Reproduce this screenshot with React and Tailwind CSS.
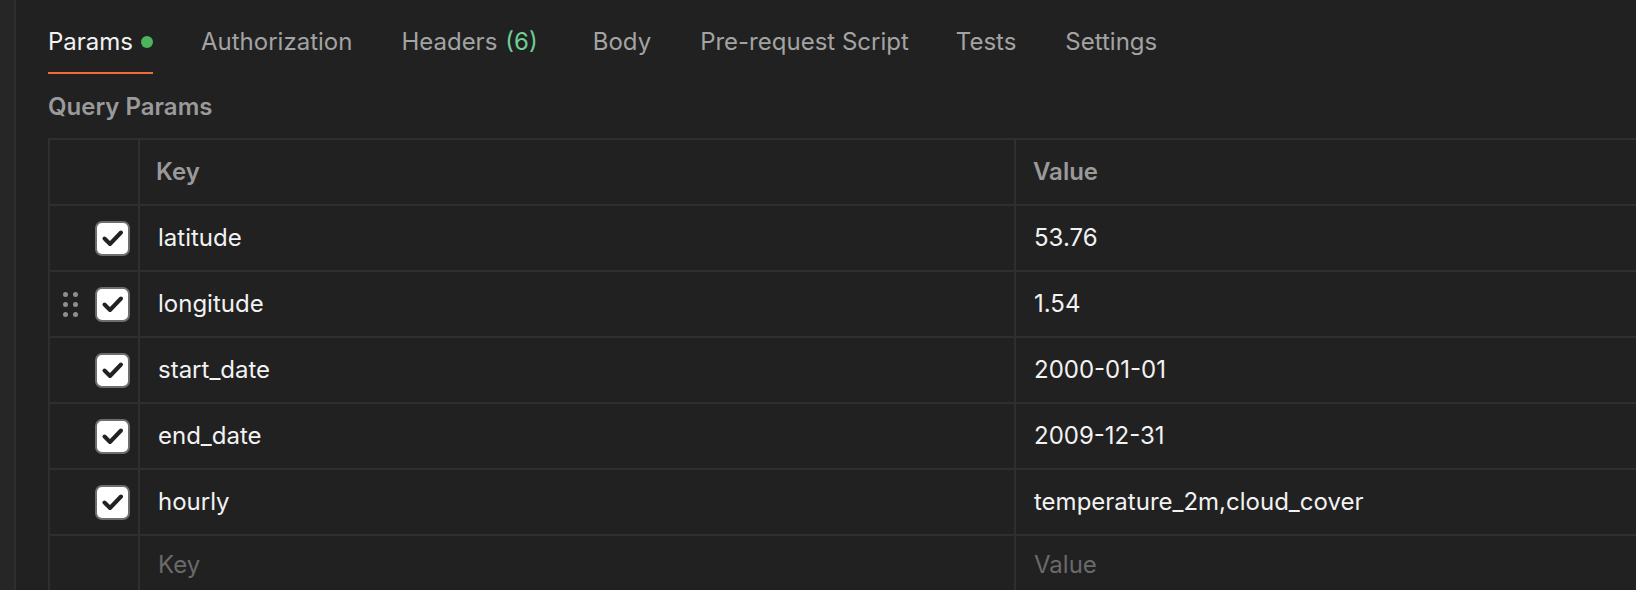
import React from "react";

const rows = [
  { k: "latitude", v: "53.76" },
  { k: "longitude", v: "1.54", drag: true },
  { k: "start_date", v: "2000-01-01" },
  { k: "end_date", v: "2009-12-31" },
  { k: "hourly", v: "temperature_2m,cloud_cover" },
];

function Check() {
  return (
    <div className="w-[35px] h-[35px] rounded-[7px] bg-white border-2 border-[#6e6e6e] flex items-center justify-center">
      <svg width="26" height="26" viewBox="0 0 26 26" fill="none">
        <path d="M4.5 13.5 L10 19 L21 7.5" stroke="#222" strokeWidth="4" strokeLinecap="round" strokeLinejoin="round" />
      </svg>
    </div>
  );
}

function Drag() {
  return (
    <div className="grid grid-cols-2 gap-x-[3px] gap-y-[5px]">
      {[0, 1, 2, 3, 4, 5].map((i) => (
        <div key={i} className="w-[5px] h-[5px] rounded-full bg-[#8f8f8f]" />
      ))}
    </div>
  );
}

export default function App() {
  return (
    <div className="flex w-[1636px] h-[590px] bg-[#212121] overflow-hidden" style={{ fontFamily: "Inter, 'Noto Sans', sans-serif" }}>
      <div className="w-[16px] shrink-0 bg-[#262626] border-r-2 border-[#2d2d2d]" />
      <div className="flex-1 pl-[32px] min-w-0">
        <div className="flex h-[74px] text-[24px]">
          <div className="flex items-center gap-[8px] pt-[11px] border-b-2 border-[#f06b3c] text-[#f2f2f2] pr-0">
            <span>Params</span>
            <span className="w-[12px] h-[12px] rounded-full bg-[#4bb45c]" />
          </div>
          <div className="flex items-center pt-[11px] border-b-2 border-transparent ml-[48px] text-[#a3a3a3]">Authorization</div>
          <div className="flex items-center pt-[11px] border-b-2 border-transparent ml-[49px] text-[#a3a3a3]">
            Headers <span className="ml-[8px] text-[#6fcf93]">(6)</span>
          </div>
          <div className="flex items-center pt-[11px] border-b-2 border-transparent ml-[55px] text-[#a3a3a3]">Body</div>
          <div className="flex items-center pt-[11px] border-b-2 border-transparent ml-[49px] text-[#a3a3a3]">Pre-request Script</div>
          <div className="flex items-center pt-[11px] border-b-2 border-transparent ml-[47px] text-[#a3a3a3]">Tests</div>
          <div className="flex items-center pt-[11px] border-b-2 border-transparent ml-[49px] text-[#a3a3a3]">Settings</div>
        </div>
        <div className="h-[64px] flex items-center pt-[2px] text-[24px] font-semibold text-[#9a9a9a]">Query Params</div>
        <div className="border-t-2 border-l-2 border-[#2f2f2f]">
          <div className="grid grid-cols-[88px_2px_874px_2px_1fr] h-[66px] border-b-2 border-[#2f2f2f] text-[24px] font-semibold text-[#9a9a9a]">
            <div />
            <div className="bg-[#2f2f2f]" />
            <div className="flex items-center pl-[16px]">Key</div>
            <div className="bg-[#2f2f2f]" />
            <div className="flex items-center pl-[17px]">Value</div>
          </div>
          {rows.map((r) => (
            <div key={r.k} className="grid grid-cols-[88px_2px_874px_2px_1fr] h-[66px] border-b-2 border-[#2f2f2f] text-[24px] text-[#f2f2f2]">
              <div className="flex items-center justify-between pl-[13px] pr-[8px]">
                <div className="w-[16px]">{r.drag && <Drag />}</div>
                <Check />
              </div>
              <div className="bg-[#2f2f2f]" />
              <div className="flex items-center pl-[18px]">{r.k}</div>
              <div className="bg-[#2f2f2f]" />
              <div className="flex items-center pl-[18px]">{r.v}</div>
            </div>
          ))}
          <div className="grid grid-cols-[88px_2px_874px_2px_1fr] h-[66px] text-[24px] text-[#6a6a6a]">
            <div />
            <div className="bg-[#2f2f2f]" />
            <div className="flex items-center pl-[18px] pb-[9px]">Key</div>
            <div className="bg-[#2f2f2f]" />
            <div className="flex items-center pl-[18px] pb-[9px]">Value</div>
          </div>
        </div>
      </div>
    </div>
  );
}
